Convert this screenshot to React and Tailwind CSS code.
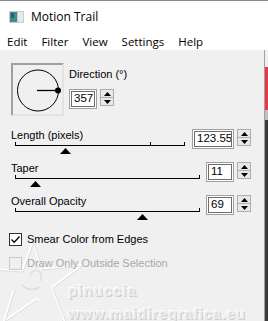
import React from "react";

const dlg = { fontFamily: '"Liberation Sans", Arial, sans-serif' };
const ui = { fontFamily: '"Open Sans", "Noto Sans", sans-serif' };

function Spinner() {
  return (
    <div className="flex flex-col w-[14px] h-[17px] border border-[#adadad] bg-[#e8e8e8]">
      <div className="flex-1 flex items-center justify-center border-b border-[#adadad]">
        <svg width="7" height="4" viewBox="0 0 7 4"><path d="M0 4 L3.5 0 L7 4 Z" fill="#000" /></svg>
      </div>
      <div className="flex-1 flex items-center justify-center">
        <svg width="7" height="4" viewBox="0 0 7 4"><path d="M0 0 L3.5 4 L7 0 Z" fill="#000" /></svg>
      </div>
    </div>
  );
}

function NumBox({ value, w }) {
  return (
    <div className="flex items-start gap-[3px]">
      <div className={`${w} h-[20px] border border-[#a0a0a0] bg-white p-px`}>
        <div className="w-full h-full border border-[#6d6d6d] flex items-center pl-[2px] text-[11.5px] leading-none text-black overflow-hidden" style={dlg}>
          {value}
        </div>
      </div>
      <Spinner />
    </div>
  );
}

function Slider({ width, thumb, ticks = [] }) {
  return (
    <div className={`relative ${width} h-[12px]`}>
      <div className="absolute left-0 right-0 top-[3px] h-px bg-black" />
      <div className="absolute left-0 top-0 w-px h-[4px] bg-black" />
      <div className="absolute right-0 top-0 w-px h-[4px] bg-black" />
      {ticks.map((t) => (
        <div key={t} className="absolute top-0 w-px h-[4px] bg-black" style={{ left: t }} />
      ))}
      <svg className="absolute top-[6px]" style={{ left: thumb - 5 }} width="11" height="6" viewBox="0 0 11 6">
        <path d="M0 6 L5.5 0 L11 6 Z" fill="#000" />
      </svg>
    </div>
  );
}

function Param({ label, sliderW, thumb, ticks, value, boxW, mt }) {
  return (
    <div className={`flex ${mt}`}>
      <div className="flex flex-col ml-[11px] w-[181px]">
        <div className="text-[11px] leading-[13px] text-black" style={dlg}>{label}</div>
        <div className="ml-[4px]">
          <Slider width={sliderW} thumb={thumb} ticks={ticks} />
        </div>
      </div>
      <div className="flex-1 flex justify-end pr-[13px]">
        <NumBox value={value} w={boxW} />
      </div>
    </div>
  );
}

export default function App() {
  return (
    <div className="relative w-[268px] h-[321px] overflow-hidden bg-[#f0f0f0]">
      {/* title bar */}
      <div className="h-[33px] bg-white border-t border-[#8c8c8c] flex items-center pl-[9px] gap-[7px]">
        <svg width="15" height="12" viewBox="0 0 15 12">
          <rect x="0" y="0" width="15" height="12" fill="#c9cdd2" />
          <rect x="1" y="1" width="7" height="10" fill="#3f8f7f" />
          <rect x="2" y="2" width="3" height="5" fill="#2a5a8a" />
          <rect x="9" y="1" width="5" height="10" fill="#e6e9ec" />
        </svg>
        <span className="text-[12px] text-black" style={ui}>Motion Trail</span>
      </div>
      {/* menu bar */}
      <div className="h-[17px] bg-white flex items-center text-[11.5px] text-black" style={ui}>
        <span className="ml-[7px]">Edit</span>
        <span className="ml-[14px]">Filter</span>
        <span className="ml-[14px]">View</span>
        <span className="ml-[14px]">Settings</span>
        <span className="ml-[14px]">Help</span>
      </div>
      {/* body */}
      <div className="flex h-[271px]">
        <div className="relative w-[264px] h-full border-t border-[#f0f0f0]">
          {/* watermark */}
          <svg className="absolute left-0 top-[190px]" width="100" height="82" viewBox="0 0 100 82">
            <path d="M33 0 L42 28 L82 24 L52 46 L66 82 L36 58 L4 80 L14 48 L-10 28 L22 30 Z" fill="none" stroke="#ffffff" strokeWidth="2" />
            <path d="M33 0 L42 28 L82 24 L52 46 L66 82 L36 58 L4 80 L14 48 L-10 28 L22 30 Z" fill="none" stroke="#dcdcdc" strokeWidth="1" transform="translate(1 1)" />
            <path d="M30 34 Q35 26 41 32 L41 40 M22 44 Q30 52 40 46" fill="none" stroke="#dedede" strokeWidth="1.5" />
          </svg>
          <div className="absolute left-[68px] top-[229px] text-[15px] font-bold tracking-[1px] text-[#ececec] [text-shadow:1px_1px_0_#cccccc,-1px_-1px_0_#ffffff]" style={dlg}>pinuccia</div>
          <div className="absolute left-[68px] top-[252px] text-[15px] font-bold tracking-[0.7px] text-[#ececec] [text-shadow:1px_1px_0_#cccccc,-1px_-1px_0_#ffffff]" style={dlg}>www.maidiregrafica.eu</div>

          {/* direction row */}
          <div className="relative flex mt-[12px] ml-[11px]">
            <div className="w-[53px] h-[53px] border-2 border-t-[#a0a0a0] border-l-[#a0a0a0] border-r-[#e3e3e3] border-b-[#e3e3e3] bg-[#f0f0f0]">
              <svg width="49" height="49" viewBox="0 0 49 49">
                <circle cx="25" cy="25.5" r="20.5" fill="none" stroke="#000" strokeWidth="1" />
                <line x1="24" y1="25.5" x2="45" y2="25.5" stroke="#000" strokeWidth="1.3" />
                <circle cx="45" cy="25.5" r="3" fill="#000" />
              </svg>
            </div>
            <div className="ml-[5px] flex flex-col">
              <div className="mt-[5px] text-[11px] leading-[13px] text-black" style={dlg}>Direction (°)</div>
              <div className="mt-[8px]">
                <NumBox value="357" w="w-[28px]" />
              </div>
            </div>
          </div>

          <div className="relative">
            <Param label="Length (pixels)" sliderW="w-[170px]" thumb={50} ticks={[135]} value="123.55" boxW="w-[42px]" mt="mt-[13px]" />
            <Param label="Taper" sliderW="w-[185px]" thumb={20} ticks={[]} value="11" boxW="w-[28px]" mt="mt-[8px]" />
            <Param label="Overall Opacity" sliderW="w-[185px]" thumb={127} ticks={[]} value="69" boxW="w-[28px]" mt="mt-[8px]" />

            {/* checkboxes */}
            <div className="flex items-center ml-[9px] mt-[13px] gap-[5px]">
              <div className="w-[13px] h-[13px] border border-[#333] bg-white flex items-center justify-center">
                <svg width="11" height="11" viewBox="0 0 11 11"><path d="M1.5 5.5 L4.2 8.2 L9.5 2.5" fill="none" stroke="#000" strokeWidth="1.3" /></svg>
              </div>
              <span className="text-[11px] leading-[13px] text-black" style={dlg}>Smear Color from Edges</span>
            </div>
            <div className="flex items-center ml-[9px] mt-[11px] gap-[5px]">
              <div className="w-[13px] h-[13px] border border-[#c8c8c8] bg-[#f0f0f0]" />
              <span className="text-[11px] leading-[13px] text-[#a8a8a8]" style={dlg}>Draw Only Outside Selection</span>
            </div>
          </div>
        </div>
        {/* right edge */}
        <div className="w-[4px] h-full flex flex-col border-l border-[#a0a0a0]">
          <div className="h-[17px] bg-[#f0f0f0]" />
          <div className="h-[43px] border-2 border-[#e53945] bg-white" />
          <div className="h-[10px] bg-[#c0c0c0]" />
          <div className="flex-1 bg-[#3a3a3a]" />
        </div>
      </div>
    </div>
  );
}
